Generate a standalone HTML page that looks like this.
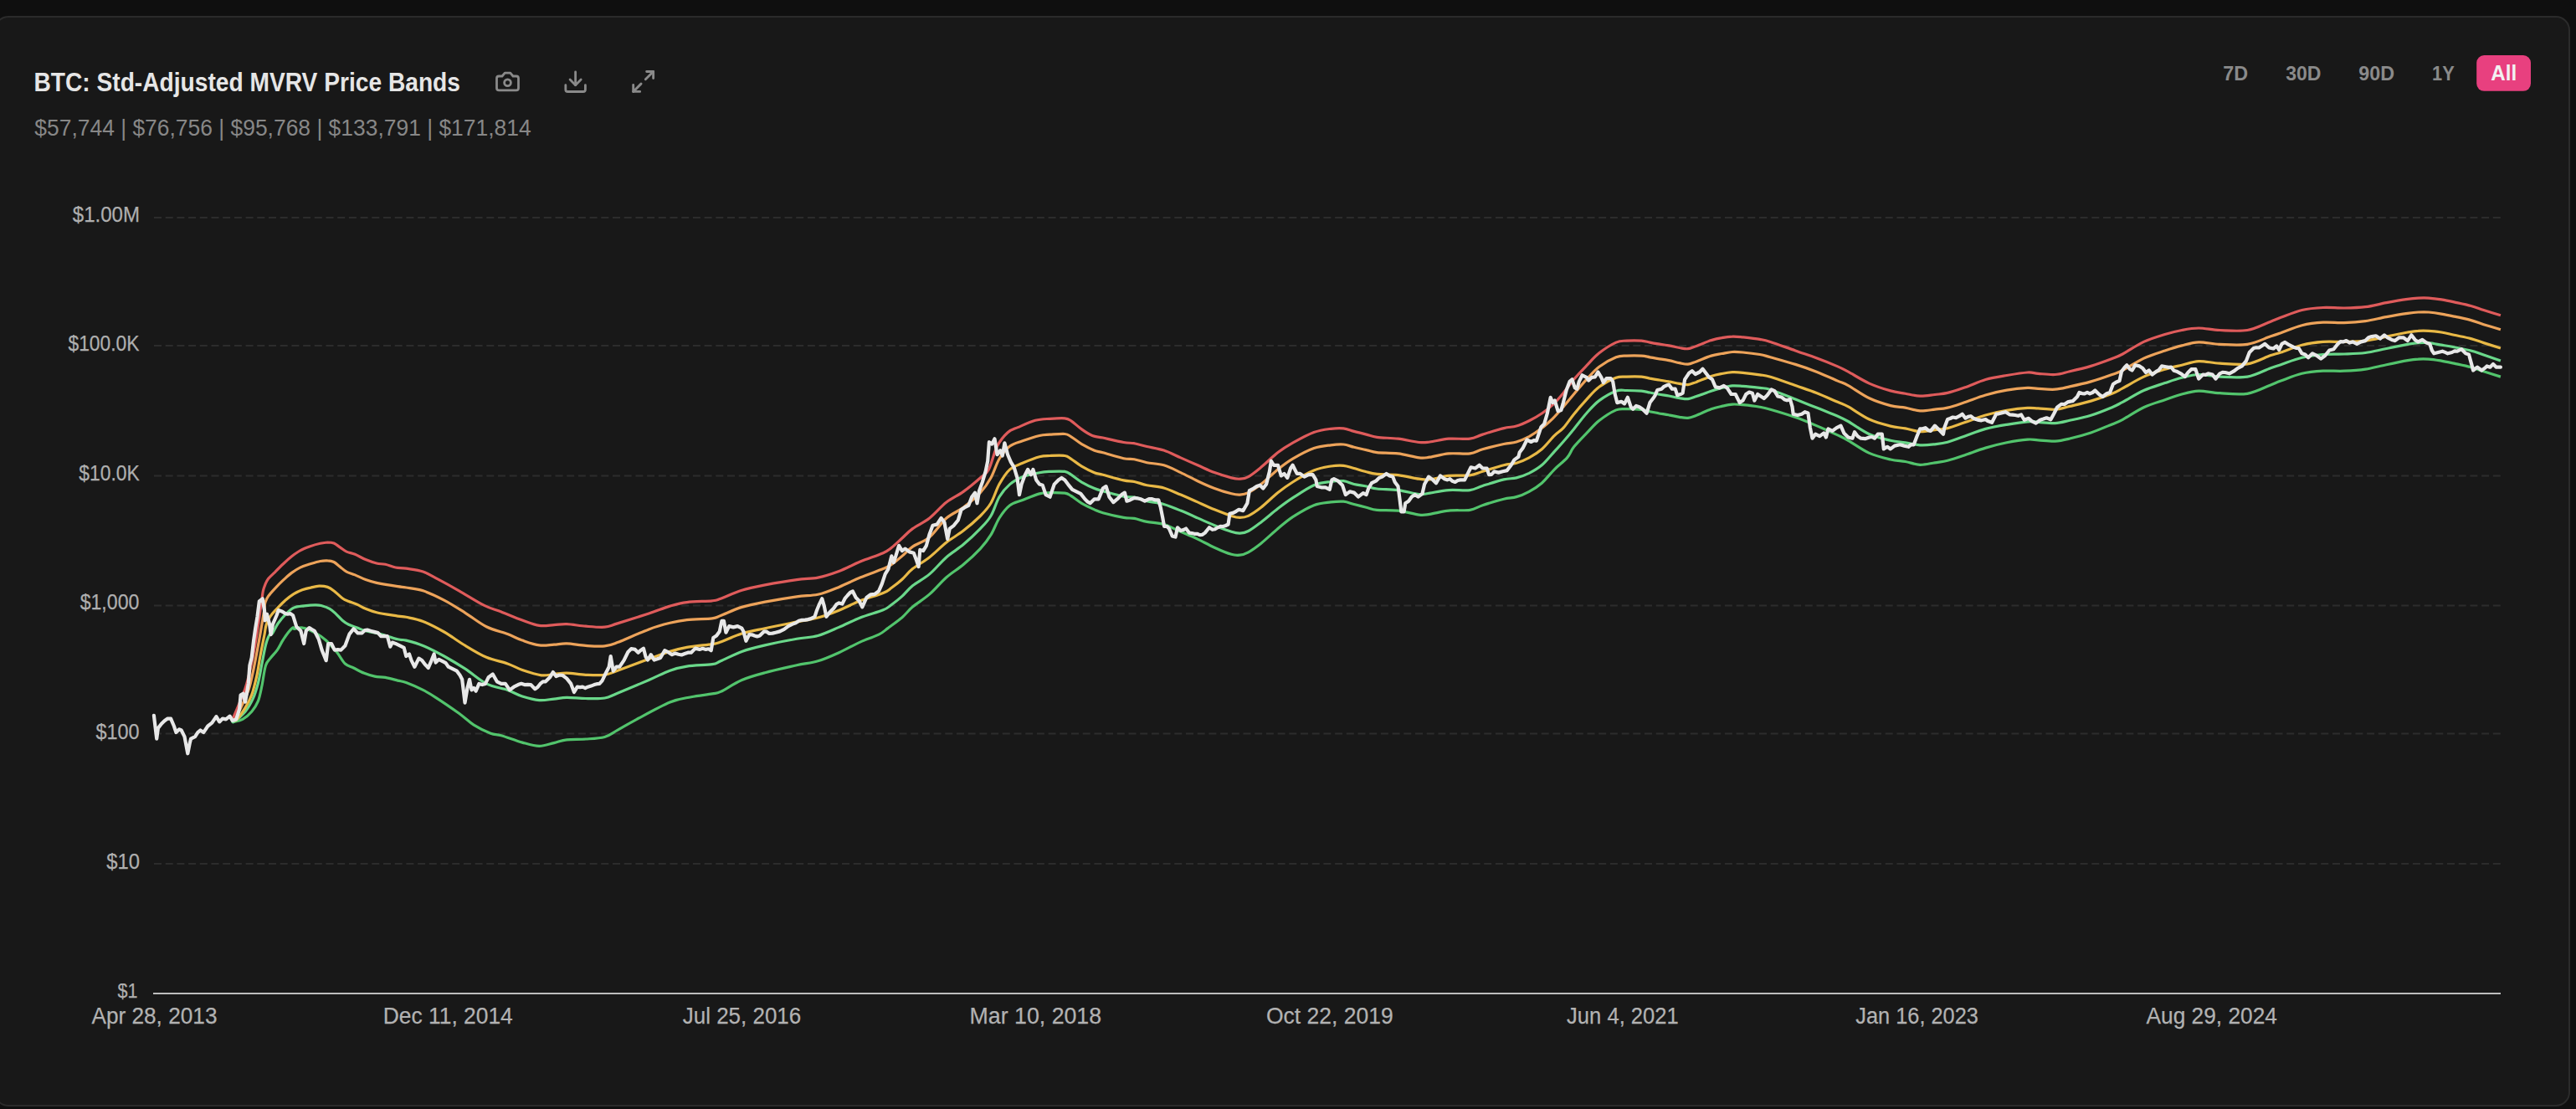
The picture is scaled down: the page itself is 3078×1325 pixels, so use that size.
<!DOCTYPE html>
<html><head><meta charset="utf-8"><style>
html,body{margin:0;padding:0;background:#0f0f0f;width:3078px;height:1325px;overflow:hidden}
#panel{position:absolute;left:-7px;top:19px;width:3078px;height:1303px;box-sizing:border-box;background:#181818;border:2px solid #2b2b2b;border-radius:17px}
svg{position:absolute;left:0;top:0}
text{font-family:"Liberation Sans",sans-serif}
.yl{fill:#afafaf;stroke:#afafaf;stroke-width:0.25px}
.xl{fill:#b2b2b2;stroke:#b2b2b2;stroke-width:0.25px}
.title{font-weight:bold;fill:#e6e6e6}
.sub{fill:#878787}
.btn{font-weight:bold;fill:#8a8a8a}
</style></head><body>
<div id="panel"></div>
<svg width="3078" height="1325" viewBox="0 0 3078 1325">
<text x="40.43" y="109.20" class="title" font-size="32.12" textLength="509.53" lengthAdjust="spacingAndGlyphs">BTC: Std-Adjusted MVRV Price Bands</text>
<text x="41.34" y="162.00" class="sub" font-size="27.62" textLength="593.30" lengthAdjust="spacingAndGlyphs">$57,744 | $76,756 | $95,768 | $133,791 | $171,814</text>
<g fill="none" stroke="#8a8a8a" stroke-width="2.15" stroke-linecap="round" stroke-linejoin="round">
 <g transform="translate(590.9,81.9) scale(1.3)"><path d="M14.5 4h-5L7 7H4a2 2 0 0 0-2 2v9a2 2 0 0 0 2 2h16a2 2 0 0 0 2-2V9a2 2 0 0 0-2-2h-3l-2.5-3z"/><circle cx="12" cy="13" r="3"/></g>
 <g transform="translate(671.9,82.0) scale(1.31)"><path d="M21 15v4a2 2 0 0 1-2 2H5a2 2 0 0 1-2-2v-4"/><path d="M7 10l5 5 5-5"/><path d="M12 15V3"/></g>
 <g transform="translate(752.7,81.5) scale(1.33)"><path d="M15 3h6v6"/><path d="M9 21H3v-6"/><path d="M21 3l-7 7"/><path d="M3 21l7-7"/></g>
</g>
<text x="2656.27" y="96.00" class="btn" font-size="23.98" textLength="29.83" lengthAdjust="spacingAndGlyphs">7D</text>
<text x="2731.24" y="96.00" class="btn" font-size="23.98" textLength="42.29" lengthAdjust="spacingAndGlyphs">30D</text>
<text x="2818.20" y="96.00" class="btn" font-size="23.98" textLength="42.84" lengthAdjust="spacingAndGlyphs">90D</text>
<text x="2905.99" y="96.00" class="btn" font-size="23.98" textLength="26.72" lengthAdjust="spacingAndGlyphs">1Y</text>
<rect x="2959.2" y="66.1" width="64.8" height="42.7" rx="9" fill="#e8407f"/>
<text x="2976.27" y="96.00" class="btn" font-size="25.29" textLength="30.97" lengthAdjust="spacingAndGlyphs" style="fill:#f2f2f2">All</text>
<line x1="184" y1="260.0" x2="2988" y2="260.0" stroke="#2c2c2c" stroke-width="2" stroke-dasharray="9 4.7"/>
<line x1="184" y1="413.1" x2="2988" y2="413.1" stroke="#2c2c2c" stroke-width="2" stroke-dasharray="9 4.7"/>
<line x1="184" y1="568.4" x2="2988" y2="568.4" stroke="#2c2c2c" stroke-width="2" stroke-dasharray="9 4.7"/>
<line x1="184" y1="723.5" x2="2988" y2="723.5" stroke="#2c2c2c" stroke-width="2" stroke-dasharray="9 4.7"/>
<line x1="184" y1="876.6" x2="2988" y2="876.6" stroke="#2c2c2c" stroke-width="2" stroke-dasharray="9 4.7"/>
<line x1="184" y1="1031.9" x2="2988" y2="1031.9" stroke="#2c2c2c" stroke-width="2" stroke-dasharray="9 4.7"/>
<line x1="183" y1="1187" x2="2988" y2="1187" stroke="#bdbdbd" stroke-width="2.2"/>
<text x="86.76" y="265.00" class="yl" font-size="26.16" textLength="80.30" lengthAdjust="spacingAndGlyphs">$1.00M</text>
<text x="81.47" y="418.90" class="yl" font-size="26.16" textLength="85.09" lengthAdjust="spacingAndGlyphs">$100.0K</text>
<text x="94.37" y="574.00" class="yl" font-size="26.16" textLength="72.37" lengthAdjust="spacingAndGlyphs">$10.0K</text>
<text x="95.67" y="727.90" class="yl" font-size="26.02" textLength="70.72" lengthAdjust="spacingAndGlyphs">$1,000</text>
<text x="114.47" y="883.00" class="yl" font-size="26.16" textLength="52.08" lengthAdjust="spacingAndGlyphs">$100</text>
<text x="127.16" y="1037.50" class="yl" font-size="25.44" textLength="39.76" lengthAdjust="spacingAndGlyphs">$10</text>
<text x="140.58" y="1192.00" class="yl" font-size="24.71" textLength="23.94" lengthAdjust="spacingAndGlyphs">$1</text>
<text x="109.40" y="1223.30" class="xl" font-size="28.34" textLength="150.12" lengthAdjust="spacingAndGlyphs">Apr 28, 2013</text>
<text x="457.79" y="1223.30" class="xl" font-size="28.34" textLength="155.02" lengthAdjust="spacingAndGlyphs">Dec 11, 2014</text>
<text x="815.78" y="1223.30" class="xl" font-size="28.34" textLength="141.49" lengthAdjust="spacingAndGlyphs">Jul 25, 2016</text>
<text x="1158.56" y="1223.30" class="xl" font-size="28.34" textLength="157.58" lengthAdjust="spacingAndGlyphs">Mar 10, 2018</text>
<text x="1512.97" y="1223.30" class="xl" font-size="28.34" textLength="151.75" lengthAdjust="spacingAndGlyphs">Oct 22, 2019</text>
<text x="1872.09" y="1223.30" class="xl" font-size="28.34" textLength="133.70" lengthAdjust="spacingAndGlyphs">Jun 4, 2021</text>
<text x="2217.29" y="1223.30" class="xl" font-size="28.34" textLength="146.59" lengthAdjust="spacingAndGlyphs">Jan 16, 2023</text>
<text x="2564.50" y="1223.30" class="xl" font-size="28.34" textLength="156.38" lengthAdjust="spacingAndGlyphs">Aug 29, 2024</text>
<path d="M278.6,862.4 C278.7,862.4 277.3,863.0 279.2,862.5 C281.1,861.9 286.3,861.4 289.9,859.4 C293.5,857.3 297.6,853.8 300.7,850.2 C303.7,846.6 306.3,843.0 308.3,837.9 C310.4,832.8 311.4,826.7 312.9,819.5 C314.4,812.4 315.7,800.6 317.5,795.0 C319.3,789.4 321.3,788.9 323.6,785.8 C325.9,782.8 329.0,779.9 331.3,776.6 C333.6,773.3 335.4,769.2 337.4,765.9 C339.5,762.6 341.5,759.4 343.6,756.7 C345.7,754.0 348.6,750.7 350.0,749.8 C351.4,748.9 349.8,751.3 351.8,751.3 C353.8,751.4 357.7,749.2 361.9,750.1 C366.1,750.9 372.4,753.8 377.1,756.4 C381.7,758.9 385.5,761.4 389.7,765.2 C393.9,769.0 398.5,774.5 402.3,779.1 C406.1,783.7 409.1,789.8 412.4,793.0 C415.8,796.1 418.7,796.1 422.5,798.0 C426.3,799.9 430.9,802.7 435.2,804.3 C439.4,806.0 443.6,807.3 447.8,808.1 C452.0,809.0 455.8,808.6 460.4,809.4 C465.0,810.2 471.0,812.0 475.2,813.1 C479.3,814.1 480.2,813.7 485.3,815.6 C490.3,817.5 499.6,821.5 505.5,824.4 C511.3,827.4 513.5,828.7 520.6,833.3 C527.8,837.9 540.8,846.8 548.4,852.2 C556.0,857.7 559.7,862.1 566.1,866.1 C572.4,870.1 580.8,874.1 586.3,876.2 C591.7,878.3 592.6,876.9 598.9,878.7 C605.2,880.5 616.6,885.0 624.1,887.1 C631.7,889.2 638.0,891.3 644.3,891.4 C650.7,891.4 656.5,888.8 662.0,887.6 C667.5,886.3 670.9,884.5 677.2,883.8 C683.5,883.0 692.3,883.6 699.9,883.0 C707.5,882.5 716.3,882.3 722.6,880.5 C728.9,878.7 731.5,875.9 737.8,872.4 C744.0,869.0 749.5,865.4 760.0,859.8 C770.5,854.2 789.5,843.6 800.5,839.0 C811.5,834.5 817.3,834.4 825.8,832.7 C834.2,831.0 845.1,830.0 851.0,828.9 C856.9,827.9 855.2,829.1 861.1,826.4 C867.0,823.7 877.5,816.3 886.4,812.5 C895.2,808.7 903.2,806.6 914.1,803.7 C925.1,800.7 941.5,797.2 952.0,794.8 C962.5,792.5 968.9,792.3 977.3,789.8 C985.7,787.3 994.1,783.5 1002.5,779.7 C1010.9,775.9 1019.9,770.6 1027.8,767.1 C1035.7,763.5 1044.4,761.1 1050.0,758.2 C1055.6,755.4 1056.8,753.5 1061.5,750.1 C1066.1,746.6 1073.0,741.8 1077.9,737.7 C1082.7,733.5 1085.0,729.7 1090.5,725.1 C1096.0,720.4 1104.0,715.8 1110.7,709.9 C1117.4,704.0 1124.2,695.6 1130.9,689.7 C1137.6,683.8 1144.4,680.2 1151.1,674.5 C1157.8,668.9 1165.8,661.5 1171.3,655.6 C1176.8,649.7 1180.2,645.3 1183.9,639.2 C1187.7,633.1 1190.3,624.9 1194.0,619.0 C1197.8,613.1 1202.0,607.4 1206.7,603.8 C1211.3,600.3 1215.9,599.8 1221.8,597.5 C1227.7,595.2 1236.5,591.4 1242.0,589.9 C1247.5,588.5 1249.6,588.8 1254.6,588.7 C1259.7,588.6 1268.1,588.6 1272.3,589.2 C1276.5,589.8 1276.5,590.5 1279.9,592.5 C1283.3,594.5 1287.9,598.6 1292.5,601.3 C1297.2,604.0 1303.5,607.0 1307.7,608.9 C1311.9,610.8 1312.0,611.1 1317.8,612.7 C1323.6,614.3 1336.4,617.3 1342.6,618.4 C1348.9,619.5 1350.6,618.6 1355.3,619.4 C1359.9,620.2 1364.5,622.3 1370.4,623.4 C1376.3,624.6 1383.9,624.5 1390.6,626.5 C1397.3,628.4 1404.1,632.4 1410.8,635.3 C1417.5,638.2 1424.3,641.0 1431.0,644.1 C1437.7,647.3 1444.5,651.2 1451.2,654.2 C1457.9,657.3 1466.4,660.9 1471.4,662.3 C1476.5,663.8 1478.1,663.5 1481.5,663.1 C1484.9,662.7 1487.4,662.1 1491.6,659.8 C1495.8,657.5 1500.9,653.9 1506.8,649.2 C1512.7,644.5 1520.7,636.8 1527.0,631.5 C1533.3,626.3 1537.5,622.3 1544.6,617.6 C1551.8,613.0 1562.3,606.7 1569.9,603.7 C1577.5,600.8 1584.2,600.7 1590.1,599.9 C1596.0,599.2 1600.6,598.8 1605.3,599.2 C1609.9,599.6 1613.3,601.3 1617.9,602.5 C1622.4,603.7 1628.1,605.1 1632.6,606.3 C1637.2,607.4 1638.9,608.7 1645.3,609.3 C1651.6,609.9 1662.1,609.1 1670.5,610.1 C1678.9,611.0 1689.4,614.4 1695.8,615.1 C1702.1,615.8 1702.5,615.2 1708.4,614.3 C1714.3,613.5 1723.1,610.9 1731.1,610.1 C1739.1,609.2 1749.6,610.3 1756.4,609.3 C1763.1,608.2 1764.8,605.9 1771.5,603.7 C1778.2,601.5 1790.0,597.8 1796.8,596.2 C1803.5,594.5 1806.9,595.1 1811.9,593.6 C1817.0,592.2 1822.0,590.1 1827.1,587.3 C1832.1,584.6 1837.2,581.6 1842.2,577.2 C1847.3,572.8 1852.3,565.9 1857.4,560.8 C1862.4,555.8 1868.7,551.4 1872.5,546.9 C1876.4,542.5 1876.6,539.0 1880.5,534.1 C1884.4,529.3 1890.6,523.0 1895.7,517.7 C1900.7,512.5 1904.9,507.2 1910.8,502.6 C1916.7,497.9 1925.5,492.3 1931.0,489.9 C1936.5,487.6 1938.6,488.8 1943.6,488.7 C1948.7,488.6 1956.7,488.9 1961.3,489.4 C1965.9,489.9 1968.0,491.0 1971.4,491.7 C1974.8,492.4 1977.7,493.1 1981.5,493.7 C1985.3,494.4 1989.9,495.0 1994.1,495.8 C1998.4,496.5 2003.0,497.7 2006.8,498.3 C2010.6,498.9 2013.5,499.6 2016.9,499.3 C2020.2,499.0 2022.3,498.0 2027.0,496.3 C2031.6,494.5 2039.6,490.5 2044.6,488.7 C2049.7,486.9 2053.1,486.3 2057.3,485.4 C2061.5,484.5 2065.7,483.4 2069.9,483.1 C2074.1,482.8 2077.1,483.1 2082.5,483.6 C2088.0,484.1 2097.3,485.2 2102.7,486.2 C2108.2,487.1 2108.3,487.1 2115.4,489.2 C2122.4,491.2 2136.1,495.3 2145.3,498.5 C2154.4,501.7 2162.1,505.0 2170.5,508.6 C2178.9,512.2 2189.4,517.0 2195.8,519.9 C2202.1,522.9 2202.1,522.7 2208.4,526.3 C2214.7,529.8 2225.2,537.6 2233.6,541.4 C2242.1,545.2 2251.7,547.3 2258.9,549.0 C2266.0,550.7 2270.7,550.5 2276.6,551.5 C2282.5,552.6 2288.4,555.1 2294.2,555.3 C2300.1,555.5 2306.4,553.6 2311.9,552.8 C2317.4,551.9 2321.2,551.7 2327.1,550.3 C2333.0,548.8 2339.7,546.5 2347.3,543.9 C2354.8,541.4 2364.1,537.6 2372.5,535.1 C2380.9,532.6 2389.4,530.5 2397.8,528.8 C2406.1,527.1 2416.4,525.5 2422.6,525.1 C2428.9,524.6 2429.8,525.5 2435.3,525.8 C2440.7,526.1 2449.1,527.4 2455.5,527.1 C2461.8,526.8 2466.0,525.7 2473.1,524.0 C2480.3,522.4 2490.0,519.8 2498.4,517.0 C2506.8,514.1 2517.3,509.5 2523.6,506.9 C2529.9,504.3 2529.9,504.7 2536.3,501.3 C2542.6,497.9 2553.1,490.6 2561.5,486.7 C2569.9,482.8 2579.2,480.4 2586.8,477.8 C2594.3,475.2 2600.2,472.8 2607.0,471.0 C2613.7,469.2 2619.6,467.4 2627.2,467.2 C2634.7,467.0 2642.7,469.2 2652.4,469.7 C2662.1,470.3 2675.2,471.9 2685.3,470.3 C2695.3,468.7 2706.0,462.7 2712.6,460.2 C2719.3,457.6 2718.9,457.4 2725.3,455.1 C2731.6,452.8 2742.1,448.2 2750.5,446.3 C2758.9,444.3 2767.3,443.7 2775.8,443.2 C2784.2,442.7 2792.6,443.6 2801.0,443.2 C2809.4,442.9 2817.8,442.5 2826.3,441.2 C2834.7,439.9 2843.1,437.4 2851.5,435.7 C2859.9,433.9 2870.5,431.7 2876.8,430.6 C2883.1,429.5 2885.2,429.3 2889.4,429.1 C2893.6,428.8 2897.4,428.8 2902.0,429.1 C2906.6,429.4 2912.1,430.3 2917.2,431.1 C2922.2,432.0 2926.4,432.9 2932.3,434.1 C2938.2,435.4 2946.6,437.1 2952.5,438.7 C2958.4,440.3 2961.8,441.8 2967.7,443.7 C2973.6,445.6 2984.5,449.0 2987.9,450.1" fill="none" stroke="#52c46c" stroke-width="3.2" stroke-linejoin="round" stroke-linecap="butt"/>
<path d="M278.6,859.9 C278.7,860.3 276.8,864.1 279.2,862.5 C281.6,860.8 289.2,854.8 293.0,850.2 C296.8,845.6 299.6,840.5 302.2,834.9 C304.7,829.2 306.5,823.4 308.3,816.5 C310.1,809.6 311.4,801.1 312.9,793.5 C314.4,785.8 316.0,776.4 317.5,770.5 C319.0,764.6 320.7,760.6 322.1,758.2 C323.5,755.9 324.1,758.6 325.8,756.4 C327.4,754.2 329.5,748.7 332.1,745.0 C334.6,741.3 337.8,737.4 340.9,734.3 C344.1,731.1 347.2,727.8 351.0,726.1 C354.8,724.3 359.4,724.3 363.6,723.8 C367.8,723.3 372.9,722.9 376.3,722.9 C379.6,722.9 380.9,722.8 383.8,723.5 C386.8,724.3 391.0,725.6 393.9,727.3 C396.9,729.0 399.0,731.3 401.5,733.6 C404.0,736.0 406.6,739.1 409.1,741.2 C411.6,743.3 413.7,744.8 416.7,746.3 C419.6,747.7 423.4,748.8 426.8,750.1 C430.1,751.3 433.0,752.8 436.9,753.8 C440.7,754.9 443.6,754.7 450.0,756.4 C456.4,758.0 469.3,762.4 475.2,763.8 C481.0,765.3 480.2,763.8 485.3,765.1 C490.3,766.4 497.9,768.3 505.5,771.4 C513.0,774.6 522.3,779.4 530.7,784.0 C539.1,788.7 547.5,793.7 556.0,799.2 C564.4,804.7 572.8,812.7 581.2,816.9 C589.6,821.1 599.3,821.9 606.5,824.4 C613.6,827.0 617.8,830.0 624.1,832.0 C630.5,834.0 638.0,836.1 644.3,836.6 C650.7,837.1 656.5,835.6 662.0,835.1 C667.5,834.5 670.9,833.4 677.2,833.3 C683.5,833.2 692.3,834.4 699.9,834.5 C707.5,834.7 716.3,835.1 722.6,834.0 C728.9,833.0 729.0,831.8 737.8,828.2 C746.5,824.6 764.8,817.0 775.3,812.5 C785.7,808.0 792.9,803.9 800.5,801.2 C808.1,798.4 812.3,797.4 820.7,796.1 C829.1,794.8 844.3,794.6 851.0,793.6 C857.7,792.5 855.2,792.3 861.1,789.8 C867.0,787.3 877.5,781.6 886.4,778.4 C895.2,775.3 903.2,773.4 914.1,770.9 C925.1,768.3 941.5,765.2 952.0,763.3 C962.5,761.4 968.9,761.8 977.3,759.5 C985.7,757.2 994.1,753.0 1002.5,749.4 C1010.9,745.8 1019.0,741.5 1027.8,738.0 C1036.5,734.6 1048.9,731.4 1055.2,728.8 C1061.4,726.3 1061.5,725.3 1065.3,722.5 C1069.0,719.8 1073.7,716.2 1077.9,712.4 C1082.1,708.6 1085.0,704.2 1090.5,699.8 C1096.0,695.4 1104.0,691.6 1110.7,685.9 C1117.4,680.2 1124.2,671.6 1130.9,665.7 C1137.6,659.8 1144.4,656.2 1151.1,650.6 C1157.8,644.9 1165.8,637.3 1171.3,631.6 C1176.8,625.9 1180.2,622.8 1183.9,616.5 C1187.7,610.2 1190.3,600.1 1194.0,593.7 C1197.8,587.4 1202.0,582.6 1206.7,578.6 C1211.3,574.6 1215.9,572.1 1221.8,569.7 C1227.7,567.4 1236.5,565.7 1242.0,564.7 C1247.5,563.6 1249.6,563.6 1254.6,563.4 C1259.7,563.2 1268.1,562.8 1272.3,563.4 C1276.5,564.1 1276.5,565.1 1279.9,567.2 C1283.3,569.3 1287.9,573.3 1292.5,576.1 C1297.2,578.8 1303.5,581.9 1307.7,583.6 C1311.9,585.4 1312.0,585.1 1317.8,586.7 C1323.6,588.2 1336.4,591.9 1342.6,593.1 C1348.9,594.4 1350.6,593.2 1355.3,594.1 C1359.9,595.1 1364.5,597.3 1370.4,598.7 C1376.3,600.1 1383.9,600.6 1390.6,602.5 C1397.3,604.4 1404.1,607.3 1410.8,610.1 C1417.5,612.8 1424.3,615.9 1431.0,618.9 C1437.7,621.8 1444.5,625.0 1451.2,627.7 C1457.9,630.5 1466.4,633.7 1471.4,635.3 C1476.5,636.9 1478.1,637.2 1481.5,637.1 C1484.9,636.9 1487.4,636.7 1491.6,634.5 C1495.8,632.4 1500.9,628.4 1506.8,623.9 C1512.7,619.4 1520.7,612.4 1527.0,607.5 C1533.3,602.7 1537.5,599.5 1544.6,594.9 C1551.8,590.3 1562.3,583.0 1569.9,579.7 C1577.5,576.5 1584.2,576.3 1590.1,575.5 C1596.0,574.6 1600.6,574.2 1605.3,574.7 C1609.9,575.2 1613.3,577.4 1617.9,578.5 C1622.4,579.5 1628.1,580.1 1632.6,581.0 C1637.2,581.9 1638.9,583.3 1645.3,584.0 C1651.6,584.8 1662.1,584.5 1670.5,585.6 C1678.9,586.6 1689.4,590.0 1695.8,590.6 C1702.1,591.2 1702.5,589.9 1708.4,589.1 C1714.3,588.2 1723.1,586.1 1731.1,585.6 C1739.1,585.0 1749.6,586.4 1756.4,585.6 C1763.1,584.7 1764.8,582.6 1771.5,580.5 C1778.2,578.4 1790.0,574.5 1796.8,572.9 C1803.5,571.3 1806.9,572.2 1811.9,570.9 C1817.0,569.6 1822.0,567.9 1827.1,565.4 C1832.1,562.8 1837.2,560.1 1842.2,555.8 C1847.3,551.4 1853.1,544.0 1857.4,539.3 C1861.6,534.7 1864.0,532.3 1867.9,527.8 C1871.7,523.4 1875.9,518.4 1880.5,512.7 C1885.1,507.0 1890.6,499.4 1895.7,493.7 C1900.7,488.1 1904.9,483.0 1910.8,478.6 C1916.7,474.2 1925.5,469.2 1931.0,467.2 C1936.5,465.2 1938.6,466.5 1943.6,466.5 C1948.7,466.5 1956.7,466.8 1961.3,467.2 C1965.9,467.6 1968.0,468.4 1971.4,469.0 C1974.8,469.6 1977.7,470.3 1981.5,471.0 C1985.3,471.7 1989.9,472.3 1994.1,473.0 C1998.4,473.8 2003.0,475.0 2006.8,475.6 C2010.6,476.1 2013.5,476.9 2016.9,476.6 C2020.2,476.2 2022.3,475.1 2027.0,473.5 C2031.6,472.0 2039.6,468.9 2044.6,467.2 C2049.7,465.5 2053.1,464.5 2057.3,463.4 C2061.5,462.4 2065.7,461.2 2069.9,460.9 C2074.1,460.6 2077.1,461.0 2082.5,461.4 C2088.0,461.8 2097.3,462.8 2102.7,463.4 C2108.2,464.1 2108.3,463.2 2115.4,465.5 C2122.4,467.7 2136.1,473.4 2145.3,477.0 C2154.4,480.6 2162.1,483.8 2170.5,487.1 C2178.9,490.5 2189.4,494.5 2195.8,497.2 C2202.1,500.0 2202.1,500.0 2208.4,503.5 C2214.7,507.1 2225.2,514.9 2233.6,518.7 C2242.1,522.5 2251.7,524.6 2258.9,526.3 C2266.0,527.9 2270.7,527.9 2276.6,528.8 C2282.5,529.7 2288.4,531.5 2294.2,531.8 C2300.1,532.2 2306.4,531.4 2311.9,530.8 C2317.4,530.2 2321.2,529.9 2327.1,528.3 C2333.0,526.7 2339.7,523.9 2347.3,521.2 C2354.8,518.6 2364.1,514.7 2372.5,512.4 C2380.9,510.1 2389.4,508.7 2397.8,507.3 C2406.1,505.9 2416.4,504.3 2422.6,503.8 C2428.9,503.3 2429.8,504.0 2435.3,504.3 C2440.7,504.6 2449.1,505.9 2455.5,505.6 C2461.8,505.3 2466.0,503.9 2473.1,502.3 C2480.3,500.8 2490.0,498.9 2498.4,496.3 C2506.8,493.7 2517.3,489.3 2523.6,486.7 C2529.9,484.0 2529.9,483.7 2536.3,480.4 C2542.6,477.0 2553.1,470.3 2561.5,466.5 C2569.9,462.7 2579.2,460.2 2586.8,457.6 C2594.3,455.1 2600.2,453.0 2607.0,451.3 C2613.7,449.6 2619.6,447.7 2627.2,447.5 C2634.7,447.3 2642.7,449.6 2652.4,450.1 C2662.1,450.5 2675.2,451.7 2685.3,450.1 C2695.3,448.4 2706.0,442.3 2712.6,439.9 C2719.3,437.6 2718.9,437.8 2725.3,435.7 C2731.6,433.6 2742.1,429.3 2750.5,427.3 C2758.9,425.3 2767.3,424.3 2775.8,423.5 C2784.2,422.8 2792.6,423.4 2801.0,423.0 C2809.4,422.7 2817.8,422.6 2826.3,421.5 C2834.7,420.4 2843.1,418.1 2851.5,416.5 C2859.9,414.8 2870.5,412.6 2876.8,411.4 C2883.1,410.3 2885.2,409.9 2889.4,409.6 C2893.6,409.4 2897.4,409.2 2902.0,409.6 C2906.6,410.1 2912.1,411.3 2917.2,412.2 C2922.2,413.0 2926.4,413.6 2932.3,414.7 C2938.2,415.8 2946.6,417.4 2952.5,419.0 C2958.4,420.5 2961.8,422.0 2967.7,424.0 C2973.6,426.1 2984.5,429.9 2987.9,431.1" fill="none" stroke="#6ad88a" stroke-width="3.2" stroke-linejoin="round" stroke-linecap="butt"/>
<path d="M278.6,858.6 C279.2,858.9 279.9,862.3 282.3,860.2 C284.7,858.0 289.9,850.6 293.0,845.6 C296.1,840.6 298.4,836.7 300.7,830.3 C303.0,823.9 305.0,815.5 306.8,807.3 C308.6,799.1 309.8,789.4 311.4,781.2 C312.9,773.1 314.8,764.1 316.0,758.2 C317.1,752.4 317.0,749.9 318.2,746.3 C319.4,742.6 321.1,739.3 323.2,736.2 C325.3,733.0 327.9,730.5 330.8,727.3 C333.8,724.2 337.5,720.2 340.9,717.2 C344.3,714.3 347.6,711.7 351.0,709.6 C354.4,707.6 357.7,706.1 361.1,704.8 C364.5,703.6 367.8,702.8 371.2,702.1 C374.6,701.3 377.9,700.3 381.3,700.2 C384.7,700.1 388.5,700.5 391.4,701.4 C394.4,702.4 396.0,703.6 399.0,705.9 C401.9,708.1 406.1,712.6 409.1,714.7 C412.0,716.8 413.7,717.2 416.7,718.5 C419.6,719.7 423.4,720.8 426.8,722.3 C430.1,723.7 433.0,725.7 436.9,727.3 C440.7,728.9 443.6,730.3 450.0,731.7 C456.4,733.2 469.3,735.1 475.2,736.1 C481.0,737.0 480.2,736.3 485.3,737.3 C490.3,738.4 497.9,739.4 505.5,742.4 C513.0,745.3 522.3,750.2 530.7,755.0 C539.1,759.8 547.5,766.4 556.0,771.4 C564.4,776.5 572.8,781.7 581.2,785.3 C589.6,788.9 599.3,790.4 606.5,792.9 C613.6,795.4 617.4,798.1 624.1,800.5 C630.9,802.8 640.6,805.9 646.9,806.8 C653.2,807.6 657.0,805.9 662.0,805.5 C667.1,805.1 670.9,804.1 677.2,804.2 C683.5,804.4 692.3,805.9 699.9,806.3 C707.5,806.6 716.3,807.1 722.6,806.3 C728.9,805.4 729.0,804.4 737.8,801.2 C746.5,798.0 764.8,791.1 775.3,787.3 C785.7,783.5 792.9,780.7 800.5,778.4 C808.1,776.1 812.3,774.9 820.7,773.4 C829.1,771.9 844.3,770.6 851.0,769.6 C857.7,768.5 855.2,769.2 861.1,767.1 C867.0,765.0 877.5,759.7 886.4,757.0 C895.2,754.2 903.2,753.0 914.1,750.7 C925.1,748.3 941.5,745.2 952.0,743.1 C962.5,741.0 968.9,740.3 977.3,738.0 C985.7,735.7 994.1,732.6 1002.5,729.2 C1010.9,725.8 1019.0,721.3 1027.8,717.8 C1036.5,714.4 1048.9,711.2 1055.2,708.6 C1061.4,706.1 1061.5,705.1 1065.3,702.3 C1069.0,699.6 1073.7,696.0 1077.9,692.2 C1082.1,688.4 1085.0,684.0 1090.5,679.6 C1096.0,675.2 1104.0,671.0 1110.7,665.7 C1117.4,660.4 1124.2,653.3 1130.9,648.0 C1137.6,642.8 1144.4,639.4 1151.1,634.1 C1157.8,628.9 1165.8,621.9 1171.3,616.5 C1176.8,611.0 1180.2,607.6 1183.9,601.3 C1187.7,595.0 1190.3,585.3 1194.0,578.6 C1197.8,571.9 1202.0,565.1 1206.7,560.9 C1211.3,556.7 1215.9,555.9 1221.8,553.3 C1227.7,550.8 1236.5,547.2 1242.0,545.8 C1247.5,544.3 1249.6,544.7 1254.6,544.5 C1259.7,544.3 1268.1,543.9 1272.3,544.5 C1276.5,545.1 1276.5,546.2 1279.9,548.3 C1283.3,550.4 1287.9,554.4 1292.5,557.1 C1297.2,559.9 1303.5,563.0 1307.7,564.7 C1311.9,566.4 1312.0,565.7 1317.8,567.2 C1323.6,568.8 1336.4,572.6 1342.6,573.9 C1348.9,575.3 1350.6,574.5 1355.3,575.5 C1359.9,576.4 1364.5,578.5 1370.4,579.7 C1376.3,581.0 1383.9,581.1 1390.6,583.0 C1397.3,584.9 1404.1,588.3 1410.8,591.1 C1417.5,593.9 1424.3,597.0 1431.0,599.9 C1437.7,602.9 1444.5,606.1 1451.2,608.8 C1457.9,611.5 1466.4,614.8 1471.4,616.4 C1476.5,618.0 1478.1,618.4 1481.5,618.4 C1484.9,618.4 1487.4,618.4 1491.6,616.4 C1495.8,614.3 1500.9,610.9 1506.8,606.3 C1512.7,601.6 1520.7,593.6 1527.0,588.6 C1533.3,583.5 1537.5,580.4 1544.6,576.0 C1551.8,571.5 1562.3,565.2 1569.9,562.1 C1577.5,558.9 1584.2,558.0 1590.1,557.0 C1596.0,556.1 1600.6,555.8 1605.3,556.3 C1609.9,556.7 1613.3,558.3 1617.9,559.5 C1622.4,560.8 1628.1,562.7 1632.6,563.8 C1637.2,565.0 1638.9,565.7 1645.3,566.4 C1651.6,567.0 1662.1,566.7 1670.5,567.6 C1678.9,568.6 1689.4,571.3 1695.8,572.2 C1702.1,573.1 1702.5,573.6 1708.4,572.9 C1714.3,572.3 1723.1,569.2 1731.1,568.4 C1739.1,567.5 1749.6,568.7 1756.4,567.9 C1763.1,567.0 1764.8,565.4 1771.5,563.3 C1778.2,561.3 1790.0,557.4 1796.8,555.8 C1803.5,554.1 1806.9,554.7 1811.9,553.2 C1817.0,551.8 1822.0,549.7 1827.1,546.9 C1832.1,544.2 1837.2,541.2 1842.2,536.8 C1847.3,532.4 1853.1,524.6 1857.4,520.4 C1861.6,516.2 1864.0,515.6 1867.9,511.4 C1871.7,507.2 1875.9,500.7 1880.5,495.0 C1885.1,489.3 1890.6,482.8 1895.7,477.3 C1900.7,471.9 1904.9,466.5 1910.8,462.2 C1916.7,457.8 1925.5,453.3 1931.0,451.3 C1936.5,449.3 1938.6,450.3 1943.6,450.1 C1948.7,449.8 1956.7,449.7 1961.3,450.1 C1965.9,450.4 1968.0,451.4 1971.4,452.1 C1974.8,452.7 1977.7,453.2 1981.5,453.8 C1985.3,454.5 1989.9,455.1 1994.1,455.9 C1998.4,456.6 2003.0,457.8 2006.8,458.4 C2010.6,459.0 2013.5,460.0 2016.9,459.6 C2020.2,459.3 2022.3,458.0 2027.0,456.4 C2031.6,454.7 2039.6,451.2 2044.6,449.5 C2049.7,447.9 2053.1,447.3 2057.3,446.5 C2061.5,445.7 2065.7,445.0 2069.9,444.7 C2074.1,444.5 2077.1,444.7 2082.5,445.3 C2088.0,445.8 2097.3,446.9 2102.7,447.8 C2108.2,448.6 2108.3,448.2 2115.4,450.3 C2122.4,452.4 2136.1,457.4 2145.3,460.6 C2154.4,463.8 2162.1,466.2 2170.5,469.4 C2178.9,472.7 2189.4,477.6 2195.8,480.3 C2202.1,483.0 2202.1,482.4 2208.4,485.9 C2214.7,489.3 2225.2,497.1 2233.6,501.0 C2242.1,504.9 2251.7,507.3 2258.9,509.1 C2266.0,510.9 2270.7,510.8 2276.6,511.9 C2282.5,513.0 2288.4,515.4 2294.2,515.7 C2300.1,516.0 2306.4,514.3 2311.9,513.6 C2317.4,513.0 2321.2,513.1 2327.1,511.6 C2333.0,510.1 2339.7,507.4 2347.3,504.8 C2354.8,502.2 2364.1,498.4 2372.5,496.0 C2380.9,493.6 2389.4,491.8 2397.8,490.4 C2406.1,489.0 2416.4,487.8 2422.6,487.4 C2428.9,487.0 2429.8,487.6 2435.3,487.9 C2440.7,488.2 2449.1,489.6 2455.5,489.2 C2461.8,488.8 2466.0,487.1 2473.1,485.4 C2480.3,483.7 2490.0,481.6 2498.4,479.1 C2506.8,476.6 2517.3,472.8 2523.6,470.3 C2529.9,467.7 2529.9,467.3 2536.3,463.9 C2542.6,460.6 2553.1,453.8 2561.5,450.1 C2569.9,446.3 2579.2,443.5 2586.8,441.2 C2594.3,438.9 2600.2,437.8 2607.0,436.2 C2613.7,434.6 2619.6,432.0 2627.2,431.6 C2634.7,431.3 2642.7,433.6 2652.4,434.1 C2662.1,434.7 2675.2,436.5 2685.3,434.9 C2695.3,433.3 2706.0,427.1 2712.6,424.8 C2719.3,422.5 2718.9,423.1 2725.3,421.0 C2731.6,418.9 2742.1,414.3 2750.5,412.2 C2758.9,410.1 2767.3,409.0 2775.8,408.4 C2784.2,407.8 2792.6,408.6 2801.0,408.4 C2809.4,408.2 2817.8,408.2 2826.3,407.1 C2834.7,406.1 2843.1,403.8 2851.5,402.1 C2859.9,400.4 2870.5,398.2 2876.8,397.0 C2883.1,395.9 2885.2,395.5 2889.4,395.3 C2893.6,395.0 2897.4,395.0 2902.0,395.3 C2906.6,395.5 2912.1,396.2 2917.2,397.0 C2922.2,397.9 2926.4,399.0 2932.3,400.3 C2938.2,401.6 2946.6,403.0 2952.5,404.6 C2958.4,406.2 2961.8,407.8 2967.7,409.6 C2973.6,411.5 2984.5,414.9 2987.9,416.0" fill="none" stroke="#e9b946" stroke-width="3.2" stroke-linejoin="round" stroke-linecap="butt"/>
<path d="M278.6,857.4 C278.9,857.7 278.8,862.1 280.7,859.4 C282.6,856.7 287.1,847.1 289.9,841.0 C292.7,834.9 295.4,829.5 297.6,822.6 C299.8,815.7 301.2,808.0 303.0,799.6 C304.7,791.2 306.7,781.0 308.3,772.0 C310.0,763.1 311.6,753.4 312.9,746.0 C314.2,738.6 315.3,732.0 316.0,727.6 C316.6,723.2 316.1,722.3 316.9,719.7 C317.7,717.2 318.8,714.9 320.7,712.2 C322.6,709.4 325.3,706.5 328.3,703.3 C331.2,700.2 335.0,696.4 338.4,693.2 C341.8,690.1 345.1,686.9 348.5,684.4 C351.9,681.9 355.0,679.8 358.6,678.1 C362.2,676.4 366.0,675.3 369.9,674.0 C373.9,672.8 379.0,671.2 382.6,670.5 C386.2,669.8 388.7,669.7 391.4,669.9 C394.1,670.0 396.5,670.3 399.0,671.5 C401.5,672.8 404.0,675.5 406.6,677.4 C409.1,679.4 411.2,681.6 414.1,683.1 C417.1,684.7 420.5,685.3 424.2,686.9 C428.0,688.5 432.6,691.0 436.9,692.6 C441.2,694.2 443.6,695.0 450.0,696.4 C456.4,697.7 469.3,699.8 475.2,700.7 C481.0,701.6 480.2,701.1 485.3,702.0 C490.3,702.8 497.9,703.2 505.5,705.8 C513.0,708.3 522.3,712.7 530.7,717.1 C539.1,721.5 547.5,727.0 556.0,732.3 C564.4,737.5 572.8,744.5 581.2,748.7 C589.6,752.9 599.3,754.8 606.5,757.5 C613.6,760.3 617.8,762.9 624.1,765.1 C630.5,767.3 638.0,770.1 644.3,770.9 C650.7,771.8 656.5,770.5 662.0,770.2 C667.5,769.8 670.9,768.7 677.2,768.9 C683.5,769.1 692.3,770.9 699.9,771.4 C707.5,771.9 716.3,772.6 722.6,771.9 C728.9,771.3 729.0,771.0 737.8,767.6 C746.5,764.3 764.8,755.8 775.3,751.9 C785.7,748.0 792.9,746.2 800.5,744.3 C808.1,742.4 812.3,741.5 820.7,740.6 C829.1,739.6 844.3,739.6 851.0,738.8 C857.7,737.9 855.2,737.7 861.1,735.5 C867.0,733.3 877.5,728.1 886.4,725.4 C895.2,722.7 903.2,721.2 914.1,719.1 C925.1,717.0 941.5,714.3 952.0,712.8 C962.5,711.3 968.9,712.1 977.3,710.3 C985.7,708.4 994.1,704.8 1002.5,701.4 C1010.9,698.0 1019.0,693.7 1027.8,690.1 C1036.5,686.4 1048.9,682.2 1055.2,679.6 C1061.4,677.0 1061.5,677.1 1065.3,674.5 C1069.0,672.0 1073.7,668.0 1077.9,664.4 C1082.1,660.9 1085.0,656.9 1090.5,653.1 C1096.0,649.3 1104.0,647.4 1110.7,641.7 C1117.4,636.0 1124.2,624.9 1130.9,619.0 C1137.6,613.1 1144.4,611.4 1151.1,606.4 C1157.8,601.3 1165.8,594.6 1171.3,588.7 C1176.8,582.8 1180.2,577.7 1183.9,571.0 C1187.7,564.3 1190.3,554.6 1194.0,548.3 C1197.8,542.0 1202.0,536.7 1206.7,533.1 C1211.3,529.6 1215.9,528.9 1221.8,526.8 C1227.7,524.7 1236.5,521.8 1242.0,520.5 C1247.5,519.2 1249.6,519.6 1254.6,519.2 C1259.7,518.9 1268.1,518.1 1272.3,518.5 C1276.5,518.9 1276.5,519.7 1279.9,521.8 C1283.3,523.8 1287.9,527.9 1292.5,530.6 C1297.2,533.3 1303.5,536.5 1307.7,538.2 C1311.9,539.9 1312.0,539.1 1317.8,540.7 C1323.6,542.3 1336.4,546.3 1342.6,547.7 C1348.9,549.0 1350.6,547.8 1355.3,548.7 C1359.9,549.5 1364.5,551.5 1370.4,552.7 C1376.3,553.9 1383.9,553.8 1390.6,555.8 C1397.3,557.7 1404.1,561.4 1410.8,564.6 C1417.5,567.8 1424.3,571.5 1431.0,574.7 C1437.7,577.9 1444.5,581.0 1451.2,583.5 C1457.9,586.1 1466.4,588.6 1471.4,589.8 C1476.5,591.1 1478.1,591.3 1481.5,591.1 C1484.9,590.9 1487.4,590.7 1491.6,588.6 C1495.8,586.5 1500.9,583.1 1506.8,578.5 C1512.7,573.9 1520.7,565.9 1527.0,560.8 C1533.3,555.8 1537.5,552.4 1544.6,548.2 C1551.8,544.0 1562.3,538.3 1569.9,535.6 C1577.5,532.8 1584.2,532.5 1590.1,531.8 C1596.0,531.0 1600.6,530.6 1605.3,531.0 C1609.9,531.4 1613.3,533.2 1617.9,534.3 C1622.4,535.4 1628.1,536.5 1632.6,537.6 C1637.2,538.6 1638.9,539.9 1645.3,540.6 C1651.6,541.3 1662.1,540.8 1670.5,541.9 C1678.9,542.9 1689.4,546.2 1695.8,546.9 C1702.1,547.6 1702.5,547.0 1708.4,546.2 C1714.3,545.3 1723.1,542.6 1731.1,541.9 C1739.1,541.2 1749.6,542.7 1756.4,541.9 C1763.1,541.0 1764.8,538.7 1771.5,536.8 C1778.2,534.9 1790.0,532.0 1796.8,530.5 C1803.5,529.0 1806.9,529.5 1811.9,528.0 C1817.0,526.5 1822.0,524.4 1827.1,521.7 C1832.1,518.9 1837.5,515.2 1842.2,511.6 C1846.9,508.0 1851.0,504.3 1855.3,500.1 C1859.5,495.8 1863.7,491.0 1867.9,486.2 C1872.1,481.3 1875.9,476.5 1880.5,471.0 C1885.1,465.5 1890.6,458.8 1895.7,453.3 C1900.7,447.9 1904.9,442.6 1910.8,438.2 C1916.7,433.8 1925.5,429.0 1931.0,426.8 C1936.5,424.6 1938.6,425.3 1943.6,425.1 C1948.7,424.8 1956.7,424.8 1961.3,425.1 C1965.9,425.3 1968.0,426.2 1971.4,426.8 C1974.8,427.4 1977.7,428.0 1981.5,428.6 C1985.3,429.2 1989.9,429.8 1994.1,430.6 C1998.4,431.4 2003.0,432.9 2006.8,433.6 C2010.6,434.4 2013.5,435.4 2016.9,435.2 C2020.2,434.9 2022.3,433.6 2027.0,431.9 C2031.6,430.2 2039.6,426.6 2044.6,425.1 C2049.7,423.5 2053.1,423.3 2057.3,422.5 C2061.5,421.8 2065.7,420.8 2069.9,420.5 C2074.1,420.3 2077.1,420.5 2082.5,421.0 C2088.0,421.5 2097.3,422.6 2102.7,423.5 C2108.2,424.5 2108.3,424.8 2115.4,426.8 C2122.4,428.8 2136.1,432.5 2145.3,435.4 C2154.4,438.2 2162.1,440.9 2170.5,444.2 C2178.9,447.5 2189.4,452.3 2195.8,455.1 C2202.1,457.8 2202.1,457.2 2208.4,460.6 C2214.7,464.1 2225.2,471.8 2233.6,475.8 C2242.1,479.8 2251.7,482.7 2258.9,484.6 C2266.0,486.5 2270.7,486.1 2276.6,487.1 C2282.5,488.2 2288.4,490.6 2294.2,490.9 C2300.1,491.2 2306.4,489.8 2311.9,489.1 C2317.4,488.5 2321.2,488.5 2327.1,487.1 C2333.0,485.7 2339.7,483.3 2347.3,480.8 C2354.8,478.3 2364.1,474.4 2372.5,472.0 C2380.9,469.5 2389.4,467.6 2397.8,466.2 C2406.1,464.7 2416.4,463.7 2422.6,463.4 C2428.9,463.1 2429.8,464.1 2435.3,464.4 C2440.7,464.7 2449.1,465.6 2455.5,465.2 C2461.8,464.8 2466.0,463.5 2473.1,461.9 C2480.3,460.4 2490.0,458.3 2498.4,455.9 C2506.8,453.5 2517.3,449.8 2523.6,447.5 C2529.9,445.3 2529.9,445.7 2536.3,442.5 C2542.6,439.2 2553.1,432.0 2561.5,428.1 C2569.9,424.2 2579.2,421.5 2586.8,419.0 C2594.3,416.5 2600.2,414.6 2607.0,412.9 C2613.7,411.2 2619.6,409.1 2627.2,408.9 C2634.7,408.6 2642.7,411.0 2652.4,411.4 C2662.1,411.8 2675.2,413.0 2685.3,411.4 C2695.3,409.9 2706.0,404.3 2712.6,402.1 C2719.3,399.8 2718.9,400.0 2725.3,397.8 C2731.6,395.5 2742.1,390.8 2750.5,388.7 C2758.9,386.6 2767.3,385.7 2775.8,385.2 C2784.2,384.6 2792.6,385.9 2801.0,385.7 C2809.4,385.4 2817.8,384.8 2826.3,383.6 C2834.7,382.5 2843.1,380.1 2851.5,378.6 C2859.9,377.0 2870.5,375.2 2876.8,374.3 C2883.1,373.4 2885.2,373.2 2889.4,373.0 C2893.6,372.8 2897.4,372.7 2902.0,373.0 C2906.6,373.4 2912.1,374.2 2917.2,375.1 C2922.2,375.9 2926.4,376.8 2932.3,378.1 C2938.2,379.3 2946.6,381.0 2952.5,382.6 C2958.4,384.2 2961.8,385.8 2967.7,387.7 C2973.6,389.5 2984.5,392.7 2987.9,393.7" fill="none" stroke="#eda35a" stroke-width="3.2" stroke-linejoin="round" stroke-linecap="butt"/>
<path d="M278.6,856.1 C278.7,856.1 276.8,861.9 279.2,856.3 C281.6,850.7 289.4,833.3 293.0,822.6 C296.6,811.9 298.4,802.7 300.7,792.0 C303.0,781.2 304.9,770.0 306.8,758.2 C308.7,746.5 311.1,728.7 312.1,721.5 C313.2,714.2 312.8,717.3 313.1,714.7 C313.5,712.1 313.8,708.6 314.4,705.9 C315.0,703.1 315.9,700.7 316.9,698.3 C318.0,695.9 318.8,693.8 320.7,691.3 C322.6,688.9 325.3,686.7 328.3,683.8 C331.2,680.8 335.0,676.8 338.4,673.7 C341.8,670.5 345.1,667.5 348.5,664.8 C351.9,662.2 355.0,659.8 358.6,657.9 C362.2,655.9 366.0,654.5 369.9,653.1 C373.9,651.6 379.0,650.1 382.6,649.3 C386.2,648.5 388.7,648.1 391.4,648.0 C394.1,648.0 396.5,648.0 399.0,649.0 C401.5,650.1 404.0,652.4 406.6,654.1 C409.1,655.8 411.2,657.8 414.1,659.1 C417.1,660.5 420.5,660.7 424.2,662.3 C428.0,663.9 432.6,666.8 436.9,668.6 C441.2,670.4 446.1,672.1 450.0,673.0 C453.9,674.0 456.6,673.5 460.4,674.3 C464.2,675.1 468.5,677.2 472.6,678.0 C476.8,678.8 479.8,678.4 485.3,679.2 C490.7,680.1 499.1,680.9 505.5,683.0 C511.8,685.1 516.0,688.1 523.1,691.9 C530.3,695.7 539.1,700.5 548.4,705.8 C557.6,711.0 570.3,719.2 578.7,723.4 C587.1,727.6 591.3,728.1 598.9,731.0 C606.5,734.0 616.6,738.4 624.1,741.1 C631.7,743.8 638.0,746.5 644.3,747.4 C650.7,748.4 656.5,747.0 662.0,746.7 C667.5,746.4 670.9,745.4 677.2,745.7 C683.5,745.9 692.3,747.6 699.9,748.2 C707.5,748.8 716.3,749.7 722.6,749.2 C728.9,748.6 729.0,747.6 737.8,744.9 C746.5,742.2 764.8,736.4 775.3,733.0 C785.7,729.5 792.9,726.4 800.5,724.1 C808.1,721.9 812.3,720.6 820.7,719.6 C829.1,718.5 844.3,718.5 851.0,717.8 C857.7,717.1 855.2,717.4 861.1,715.3 C867.0,713.2 877.5,707.9 886.4,705.2 C895.2,702.5 903.2,701.0 914.1,698.9 C925.1,696.8 941.5,694.0 952.0,692.6 C962.5,691.1 968.9,691.7 977.3,690.1 C985.7,688.4 994.1,685.6 1002.5,682.5 C1010.9,679.3 1019.0,674.7 1027.8,671.1 C1036.5,667.5 1048.9,663.5 1055.2,660.7 C1061.4,657.9 1061.5,657.3 1065.3,654.3 C1069.0,651.4 1073.7,646.8 1077.9,643.0 C1082.1,639.2 1085.0,635.6 1090.5,631.6 C1096.0,627.6 1104.0,624.3 1110.7,619.0 C1117.4,613.7 1124.2,605.3 1130.9,600.1 C1137.6,594.8 1144.4,592.3 1151.1,587.4 C1157.8,582.6 1166.3,575.4 1171.3,571.0 C1176.4,566.6 1178.0,567.2 1181.4,560.9 C1184.8,554.6 1187.7,540.5 1191.5,533.1 C1195.3,525.8 1199.9,520.5 1204.1,516.7 C1208.4,512.9 1211.3,512.8 1216.8,510.4 C1222.2,508.0 1230.7,504.0 1237.0,502.3 C1243.3,500.6 1248.8,500.7 1254.6,500.3 C1260.5,499.9 1268.1,499.4 1272.3,499.8 C1276.5,500.2 1276.5,500.6 1279.9,502.8 C1283.3,505.0 1288.3,510.0 1292.5,512.9 C1296.7,515.9 1300.9,518.8 1305.2,520.5 C1309.4,522.2 1311.5,521.7 1317.8,523.0 C1324.0,524.4 1336.4,527.4 1342.6,528.5 C1348.9,529.6 1350.6,528.9 1355.3,529.7 C1359.9,530.6 1364.5,532.1 1370.4,533.5 C1376.3,534.9 1383.9,535.9 1390.6,538.1 C1397.3,540.3 1404.1,544.0 1410.8,546.9 C1417.5,549.9 1424.3,552.8 1431.0,555.8 C1437.7,558.7 1444.5,562.1 1451.2,564.6 C1457.9,567.1 1466.4,569.6 1471.4,570.9 C1476.5,572.2 1478.1,572.4 1481.5,572.2 C1484.9,572.0 1487.4,572.0 1491.6,569.6 C1495.8,567.3 1500.9,563.1 1506.8,558.3 C1512.7,553.4 1520.7,545.4 1527.0,540.6 C1533.3,535.8 1537.5,533.2 1544.6,529.2 C1551.8,525.2 1562.3,519.4 1569.9,516.6 C1577.5,513.8 1584.2,513.1 1590.1,512.3 C1596.0,511.5 1600.6,511.3 1605.3,511.8 C1609.9,512.3 1613.3,514.1 1617.9,515.4 C1622.4,516.6 1628.1,518.0 1632.6,519.1 C1637.2,520.3 1638.9,521.6 1645.3,522.4 C1651.6,523.3 1662.1,523.2 1670.5,524.2 C1678.9,525.2 1689.4,527.9 1695.8,528.5 C1702.1,529.1 1702.5,528.7 1708.4,528.0 C1714.3,527.3 1723.1,524.8 1731.1,524.2 C1739.1,523.6 1749.6,525.0 1756.4,524.2 C1763.1,523.4 1764.8,521.2 1771.5,519.1 C1778.2,517.0 1790.0,513.2 1796.8,511.6 C1803.5,509.9 1806.9,510.5 1811.9,509.0 C1817.0,507.6 1822.0,505.3 1827.1,502.7 C1832.2,500.2 1837.9,496.9 1842.6,493.7 C1847.3,490.6 1851.0,487.6 1855.3,483.6 C1859.5,479.6 1863.7,474.8 1867.9,469.7 C1872.1,464.7 1875.9,458.8 1880.5,453.3 C1885.1,447.9 1890.6,442.2 1895.7,436.9 C1900.7,431.7 1904.9,426.4 1910.8,421.8 C1916.7,417.1 1925.5,411.6 1931.0,409.1 C1936.5,406.7 1938.6,407.5 1943.6,407.1 C1948.7,406.8 1956.7,406.8 1961.3,407.1 C1965.9,407.5 1968.0,408.5 1971.4,409.1 C1974.8,409.8 1977.7,410.3 1981.5,410.9 C1985.3,411.5 1989.9,412.2 1994.1,412.9 C1998.4,413.7 2003.0,414.8 2006.8,415.5 C2010.6,416.1 2013.5,417.1 2016.9,416.7 C2020.2,416.4 2022.3,415.1 2027.0,413.4 C2031.6,411.8 2039.6,408.3 2044.6,406.6 C2049.7,405.0 2053.1,404.3 2057.3,403.6 C2061.5,402.8 2065.7,402.2 2069.9,402.1 C2074.1,401.9 2077.1,402.3 2082.5,402.8 C2088.0,403.4 2097.3,404.4 2102.7,405.4 C2108.2,406.3 2108.3,406.1 2115.4,408.4 C2122.4,410.6 2136.1,415.7 2145.3,418.9 C2154.4,422.2 2162.1,424.6 2170.5,427.8 C2178.9,430.9 2189.4,435.1 2195.8,437.9 C2202.1,440.6 2202.1,440.8 2208.4,444.2 C2214.7,447.6 2225.2,454.3 2233.6,458.1 C2242.1,461.9 2251.7,464.9 2258.9,466.9 C2266.0,468.9 2270.7,469.1 2276.6,470.2 C2282.5,471.3 2288.4,473.0 2294.2,473.2 C2300.1,473.4 2306.4,472.1 2311.9,471.5 C2317.4,470.8 2321.2,470.8 2327.1,469.4 C2333.0,468.1 2339.7,465.8 2347.3,463.1 C2354.8,460.5 2364.1,456.0 2372.5,453.5 C2380.9,451.1 2389.4,449.9 2397.8,448.5 C2406.1,447.1 2416.4,445.4 2422.6,445.0 C2428.9,444.6 2429.8,445.8 2435.3,446.3 C2440.7,446.7 2449.1,447.9 2455.5,447.5 C2461.8,447.1 2466.0,445.4 2473.1,443.7 C2480.3,442.1 2490.0,439.9 2498.4,437.4 C2506.8,434.9 2517.3,431.0 2523.6,428.6 C2529.9,426.2 2529.9,426.4 2536.3,423.0 C2542.6,419.7 2553.1,412.3 2561.5,408.4 C2569.9,404.5 2579.2,401.9 2586.8,399.5 C2594.3,397.2 2600.2,395.8 2607.0,394.5 C2613.7,393.2 2619.6,392.0 2627.2,392.0 C2634.7,392.0 2642.7,394.1 2652.4,394.5 C2662.1,394.9 2675.2,396.2 2685.3,394.5 C2695.3,392.8 2706.0,386.9 2712.6,384.4 C2719.3,381.9 2718.9,381.7 2725.3,379.3 C2731.6,377.0 2742.1,372.5 2750.5,370.5 C2758.9,368.5 2767.3,367.9 2775.8,367.5 C2784.2,367.1 2792.6,368.1 2801.0,368.0 C2809.4,367.9 2817.8,367.8 2826.3,366.7 C2834.7,365.7 2843.1,363.2 2851.5,361.7 C2859.9,360.1 2870.5,358.3 2876.8,357.4 C2883.1,356.4 2885.2,356.3 2889.4,356.1 C2893.6,355.9 2897.4,355.8 2902.0,356.1 C2906.6,356.4 2912.1,357.1 2917.2,357.9 C2922.2,358.7 2926.4,359.6 2932.3,360.9 C2938.2,362.2 2946.6,363.9 2952.5,365.5 C2958.4,367.1 2961.8,368.6 2967.7,370.5 C2973.6,372.4 2984.5,375.8 2987.9,376.8" fill="none" stroke="#df5b5b" stroke-width="3.2" stroke-linejoin="round" stroke-linecap="butt"/>
<path d="M183.9,854.8 L187.2,882.6 L188.9,870.0 L192.7,864.9 L196.5,861.2 L200.3,858.6 L204.1,858.6 L207.9,867.5 L210.4,875.1 L214.2,871.3 L216.7,872.5 L220.5,880.1 L224.3,900.3 L226.8,887.7 L228.1,882.6 L233.1,880.1 L236.3,875.2 L239.4,872.5 L243.2,875.1 L248.3,867.5 L253.3,863.7 L258.4,856.1 L262.2,862.4 L266.0,858.6 L270.0,859.4 L274.6,855.6 L277.7,860.9 L282.3,859.4 L286.1,847.1 L287.6,830.3 L290.7,828.7 L293.0,838.7 L294.5,830.3 L296.8,816.5 L298.4,795.0 L300.7,785.8 L303.0,765.9 L305.2,750.6 L307.5,736.8 L309.8,718.4 L313.7,715.3 L316.0,729.1 L316.7,741.4 L319.0,733.7 L322.1,746.0 L323.6,758.2 L325.9,746.0 L330.5,735.2 L332.8,729.1 L337.4,730.7 L340.5,732.7 L343.6,733.7 L346.8,733.1 L350.0,735.2 L354.3,748.8 L359.4,753.8 L363.2,769.0 L365.7,753.8 L369.5,750.1 L372.7,752.1 L375.8,753.8 L380.9,763.9 L384.6,776.6 L389.7,789.2 L392.2,769.0 L396.0,769.0 L399.8,776.6 L403.6,776.1 L407.4,776.6 L412.4,771.5 L417.5,757.6 L422.5,751.3 L427.6,756.4 L432.6,756.4 L435.8,753.1 L438.9,752.6 L443.4,753.9 L447.8,755.1 L451.6,756.1 L455.4,760.2 L459.1,759.9 L462.9,760.2 L466.3,772.7 L468.8,767.6 L472.6,768.9 L477.7,771.4 L482.7,773.9 L485.3,784.0 L489.0,781.5 L491.6,789.1 L495.4,796.7 L500.4,786.6 L504.2,789.1 L508.0,794.1 L511.8,797.9 L515.6,789.1 L518.6,781.5 L520.6,791.6 L524.4,787.8 L529.4,790.4 L532.6,792.1 L535.8,796.7 L540.8,799.2 L545.9,801.7 L549.6,806.8 L552.2,811.8 L555.5,839.6 L558.5,821.9 L561.0,811.8 L563.5,824.4 L566.1,821.9 L568.6,825.7 L572.4,816.9 L576.2,818.1 L579.9,816.9 L583.7,809.3 L588.8,805.5 L593.8,814.3 L598.9,816.9 L603.9,816.9 L609.0,824.4 L614.0,820.7 L619.1,818.1 L622.9,816.8 L626.7,818.1 L630.5,817.9 L634.2,818.1 L639.3,823.2 L642.4,821.1 L645.6,816.9 L648.8,814.4 L651.9,814.3 L657.0,809.3 L660.8,803.0 L664.5,808.0 L668.3,806.5 L672.1,806.8 L677.2,810.6 L682.2,816.9 L686.0,827.0 L689.8,820.7 L693.0,821.1 L696.1,820.7 L699.3,822.1 L702.4,820.7 L706.2,819.6 L710.0,818.1 L713.2,817.2 L716.3,816.9 L719.5,813.3 L722.6,806.8 L727.7,796.7 L729.7,784.0 L732.7,801.7 L736.5,796.7 L740.3,796.7 L745.4,789.1 L750.4,779.0 L754.2,775.2 L758.8,775.9 L762.6,779.7 L765.2,777.2 L768.9,774.6 L771.5,784.7 L774.0,788.5 L777.8,782.2 L781.6,788.5 L785.4,787.3 L789.1,786.0 L794.2,777.2 L799.2,779.7 L803.0,782.2 L806.8,780.5 L810.6,781.7 L814.4,782.5 L818.2,781.0 L822.0,779.7 L825.8,779.7 L830.8,774.6 L835.9,775.9 L839.6,774.8 L843.4,775.9 L846.6,775.3 L849.7,777.2 L852.3,762.0 L856.1,759.5 L859.8,754.4 L862.4,741.8 L864.9,741.8 L867.4,755.7 L871.2,748.1 L876.3,749.4 L881.3,748.1 L886.4,750.7 L888.4,754.4 L891.4,765.8 L895.2,758.2 L898.4,758.3 L901.5,759.5 L904.7,760.5 L907.8,759.5 L912.9,754.4 L916.0,754.7 L919.2,757.0 L923.0,756.6 L926.8,755.7 L931.8,754.4 L936.9,751.9 L941.9,748.1 L947.0,745.6 L950.8,744.2 L954.5,741.8 L958.3,740.8 L962.1,740.6 L965.3,740.1 L968.4,739.3 L973.5,736.8 L976.0,729.2 L978.5,722.9 L982.3,715.3 L984.8,724.1 L987.4,736.8 L991.2,731.7 L996.2,726.7 L999.4,722.1 L1002.5,720.4 L1006.3,721.6 L1009.5,715.2 L1012.6,711.5 L1015.8,708.0 L1018.9,706.5 L1022.7,714.0 L1026.5,717.8 L1030.3,725.4 L1035.4,714.0 L1040.4,710.3 L1045.1,709.9 L1050.1,706.1 L1053.9,697.3 L1057.7,685.9 L1061.5,679.6 L1065.3,664.4 L1067.8,672.0 L1070.3,664.4 L1074.1,651.8 L1077.9,658.1 L1081.7,655.6 L1086.7,659.4 L1091.8,660.7 L1095.1,669.5 L1097.6,677.1 L1099.3,656.9 L1103.1,658.1 L1106.9,651.8 L1110.7,637.9 L1114.5,627.8 L1119.5,626.6 L1124.6,619.0 L1128.4,624.0 L1132.2,644.2 L1134.7,631.6 L1139.7,627.8 L1144.8,621.5 L1148.6,608.9 L1152.4,606.4 L1157.4,603.8 L1161.2,593.7 L1165.0,588.7 L1167.5,601.3 L1170.1,586.2 L1173.8,576.1 L1177.6,563.4 L1180.2,550.8 L1181.9,528.1 L1185.2,530.6 L1188.5,524.3 L1191.5,543.2 L1195.3,538.2 L1197.8,544.5 L1200.4,529.3 L1204.1,543.2 L1207.9,552.1 L1211.7,558.4 L1215.5,571.0 L1218.0,591.2 L1220.6,578.6 L1224.3,568.5 L1228.1,560.9 L1231.9,567.2 L1234.4,560.9 L1238.2,573.5 L1242.0,578.6 L1245.8,579.8 L1249.6,591.2 L1254.6,593.7 L1259.7,578.6 L1264.7,573.5 L1268.5,571.0 L1272.3,573.5 L1276.1,578.6 L1281.2,584.9 L1286.2,587.4 L1291.3,589.9 L1296.3,596.3 L1299.5,599.4 L1302.6,601.3 L1307.7,596.3 L1312.7,596.3 L1317.8,583.6 L1321.6,581.1 L1325.4,593.7 L1330.4,600.1 L1335.1,596.2 L1340.1,591.1 L1343.9,588.6 L1346.4,598.7 L1350.2,597.4 L1355.3,594.9 L1359.0,595.3 L1362.8,596.2 L1367.9,598.7 L1372.9,596.2 L1376.7,596.2 L1380.5,597.4 L1384.3,597.4 L1386.8,606.3 L1389.3,618.9 L1391.1,629.0 L1394.4,629.0 L1396.9,631.5 L1400.7,640.4 L1404.5,641.6 L1407.0,630.3 L1410.8,634.0 L1414.0,633.1 L1417.1,631.5 L1420.9,636.6 L1424.1,637.0 L1427.2,637.8 L1430.4,637.8 L1433.5,639.1 L1436.7,638.8 L1439.8,636.6 L1444.9,630.3 L1448.7,632.8 L1451.8,632.2 L1455.0,630.3 L1458.2,628.8 L1461.3,629.0 L1464.5,628.0 L1467.6,626.5 L1469.4,613.8 L1473.9,612.6 L1477.1,610.8 L1480.3,608.8 L1485.3,610.1 L1490.4,601.2 L1492.9,586.1 L1497.9,583.5 L1501.7,581.0 L1505.5,579.7 L1509.3,583.5 L1513.1,578.5 L1516.9,563.3 L1518.9,550.7 L1521.9,555.8 L1527.0,555.8 L1530.8,568.4 L1534.5,565.9 L1538.3,570.9 L1542.1,559.5 L1544.6,555.8 L1549.7,565.9 L1553.5,565.9 L1558.5,569.6 L1563.6,567.1 L1568.6,567.1 L1572.4,573.4 L1573.7,581.0 L1578.7,582.3 L1583.8,582.3 L1588.8,584.8 L1591.4,573.4 L1593.9,572.2 L1598.9,574.7 L1604.0,579.7 L1607.8,591.1 L1612.8,587.3 L1617.9,588.6 L1622.9,593.6 L1628.8,589.1 L1632.6,591.1 L1635.2,583.5 L1638.9,577.2 L1644.0,574.7 L1647.8,570.9 L1651.6,569.6 L1656.6,565.9 L1660.4,568.4 L1664.2,569.6 L1666.7,576.0 L1670.5,581.0 L1672.5,596.2 L1674.3,611.3 L1677.6,611.3 L1679.3,601.2 L1683.1,598.7 L1686.9,593.6 L1690.7,591.1 L1694.5,593.6 L1699.5,589.8 L1702.1,578.5 L1707.1,569.6 L1712.2,573.4 L1716.0,577.2 L1721.0,568.4 L1726.1,572.2 L1729.2,573.4 L1732.4,572.2 L1735.5,574.8 L1738.7,576.0 L1741.8,574.0 L1745.0,573.4 L1750.1,573.4 L1753.8,565.9 L1757.6,558.3 L1762.7,559.5 L1767.7,555.8 L1771.5,559.5 L1776.6,559.5 L1779.1,567.1 L1782.2,566.8 L1785.4,563.3 L1790.5,564.6 L1795.5,563.3 L1800.6,562.1 L1805.6,555.8 L1809.4,549.4 L1814.4,545.7 L1815.7,540.6 L1819.5,535.6 L1824.5,525.5 L1829.6,528.0 L1832.8,526.1 L1835.9,526.7 L1839.7,515.4 L1841.4,510.2 L1845.2,506.4 L1848.9,493.7 L1852.7,474.8 L1855.3,481.1 L1857.8,478.6 L1861.6,491.2 L1865.4,489.9 L1867.9,481.1 L1871.7,466.0 L1875.5,455.9 L1878.5,453.3 L1881.8,463.4 L1884.3,464.7 L1886.8,455.9 L1890.6,448.3 L1895.7,450.8 L1898.2,454.6 L1902.0,450.8 L1905.8,450.3 L1909.5,444.5 L1913.3,450.8 L1915.9,457.1 L1919.6,452.1 L1924.7,452.1 L1927.2,455.9 L1929.7,471.0 L1932.3,481.1 L1937.3,479.8 L1941.1,482.4 L1944.9,474.8 L1948.7,486.2 L1951.2,488.7 L1955.0,484.9 L1958.8,486.2 L1962.6,488.7 L1967.6,493.7 L1971.4,481.1 L1975.2,476.1 L1977.7,472.3 L1980.3,466.0 L1985.3,464.7 L1987.8,462.2 L1991.0,460.6 L1994.1,459.6 L1997.9,464.7 L2001.7,464.7 L2004.2,472.3 L2008.0,471.0 L2010.6,469.7 L2013.1,453.3 L2018.1,445.8 L2021.9,443.2 L2025.7,447.0 L2030.8,444.5 L2034.5,440.7 L2038.3,445.8 L2042.1,450.8 L2045.9,453.3 L2049.7,462.2 L2054.7,463.4 L2059.8,460.9 L2063.6,463.4 L2068.6,471.0 L2073.7,471.0 L2078.7,481.1 L2082.5,478.6 L2086.3,471.0 L2090.1,468.5 L2093.9,469.7 L2096.4,478.6 L2100.2,471.0 L2104.0,473.5 L2107.8,476.1 L2111.6,472.3 L2116.6,465.5 L2120.4,467.2 L2124.2,473.5 L2128.8,474.5 L2132.0,477.2 L2135.2,478.3 L2138.9,477.0 L2141.5,485.9 L2142.7,494.7 L2147.8,496.0 L2152.8,494.7 L2156.6,492.2 L2160.4,493.4 L2162.9,511.1 L2165.5,523.7 L2169.2,518.7 L2174.3,521.2 L2179.3,517.4 L2181.9,522.5 L2184.4,512.4 L2189.4,514.9 L2194.5,511.1 L2199.5,508.6 L2203.3,517.4 L2208.4,522.5 L2213.4,523.7 L2216.0,516.2 L2219.7,521.2 L2223.5,523.7 L2228.6,524.2 L2233.6,522.5 L2236.8,522.0 L2239.9,523.7 L2243.7,518.7 L2248.8,518.7 L2250.8,536.4 L2255.1,533.8 L2258.9,536.4 L2263.9,532.6 L2267.1,531.9 L2270.3,531.3 L2275.3,532.6 L2280.4,533.8 L2283.5,531.1 L2286.7,531.3 L2290.5,521.2 L2294.2,512.4 L2297.4,512.3 L2300.6,511.1 L2303.7,513.9 L2306.9,514.9 L2311.9,508.6 L2317.0,513.6 L2322.0,518.7 L2323.3,511.1 L2327.1,501.0 L2330.2,500.0 L2333.4,498.5 L2337.2,499.1 L2341.0,497.2 L2344.7,494.7 L2348.5,499.7 L2351.7,497.9 L2354.8,497.2 L2358.0,499.7 L2361.2,501.0 L2364.3,501.9 L2367.5,502.3 L2372.5,501.0 L2375.1,503.0 L2380.1,504.8 L2385.2,494.7 L2388.3,494.3 L2391.5,493.4 L2396.5,492.2 L2401.6,495.5 L2404.7,495.6 L2407.9,496.0 L2411.5,496.8 L2415.1,495.5 L2418.8,501.8 L2423.9,499.8 L2427.7,503.1 L2432.7,505.6 L2437.8,501.8 L2441.6,500.6 L2445.4,499.3 L2450.4,501.3 L2454.2,494.2 L2458.0,486.7 L2463.0,482.9 L2466.8,483.0 L2470.6,480.4 L2473.8,479.6 L2476.9,479.1 L2482.0,474.0 L2484.5,469.0 L2487.7,470.1 L2490.8,470.3 L2494.0,468.8 L2497.1,470.3 L2500.3,469.0 L2503.4,466.5 L2508.5,471.5 L2512.3,474.0 L2517.3,470.3 L2521.1,469.0 L2524.9,458.9 L2528.7,456.4 L2532.5,455.1 L2535.0,443.7 L2538.8,438.7 L2541.3,436.2 L2545.1,441.2 L2547.6,442.5 L2551.4,436.2 L2556.5,437.4 L2560.3,439.9 L2564.0,445.0 L2567.8,442.5 L2571.6,447.5 L2576.7,443.7 L2579.2,442.5 L2583.0,437.4 L2588.0,438.2 L2591.2,438.9 L2594.3,438.7 L2597.5,442.8 L2600.7,443.7 L2605.7,446.3 L2610.8,450.1 L2614.5,445.0 L2618.3,441.2 L2623.4,441.2 L2627.2,452.6 L2632.2,447.5 L2635.4,447.9 L2638.5,446.3 L2643.6,447.5 L2647.4,452.6 L2652.4,446.3 L2655.6,444.9 L2658.7,445.0 L2663.8,446.3 L2668.8,443.7 L2673.9,439.9 L2678.9,437.4 L2684.0,431.1 L2687.8,421.0 L2692.8,416.0 L2696.0,415.3 L2699.1,415.5 L2704.2,412.2 L2706.3,410.9 L2711.4,415.5 L2716.4,416.5 L2720.2,413.4 L2723.2,418.0 L2726.5,410.9 L2730.3,408.9 L2735.4,412.2 L2740.4,414.7 L2743.6,415.9 L2746.7,416.0 L2750.5,422.3 L2754.3,423.5 L2758.1,427.3 L2763.1,422.3 L2768.2,424.8 L2773.2,428.6 L2778.3,424.8 L2783.3,418.5 L2788.4,417.2 L2793.4,410.9 L2796.6,408.1 L2799.7,408.4 L2803.5,407.1 L2807.3,409.6 L2811.1,408.4 L2816.2,410.9 L2821.2,408.4 L2826.3,407.1 L2830.1,403.3 L2833.8,402.1 L2838.9,401.3 L2843.9,404.6 L2849.0,400.3 L2852.8,403.3 L2857.8,405.9 L2861.6,407.1 L2866.7,403.3 L2871.7,403.3 L2876.8,407.1 L2881.3,400.3 L2885.6,405.9 L2889.4,408.4 L2894.4,405.9 L2899.5,409.6 L2903.3,410.9 L2905.8,418.5 L2908.3,422.3 L2913.4,421.0 L2918.4,419.7 L2921.6,420.9 L2924.7,422.3 L2929.8,421.0 L2933.0,419.3 L2936.1,419.7 L2941.2,417.2 L2946.2,422.3 L2950.0,423.5 L2953.8,437.4 L2955.1,442.5 L2960.1,438.7 L2965.2,442.5 L2968.9,439.9 L2971.5,437.4 L2975.3,438.7 L2979.0,434.9 L2982.8,438.7 L2987.9,438.7" fill="none" stroke="#e8e8e8" stroke-width="4.2" stroke-linejoin="round" stroke-linecap="round"/>
</svg>
</body></html>
